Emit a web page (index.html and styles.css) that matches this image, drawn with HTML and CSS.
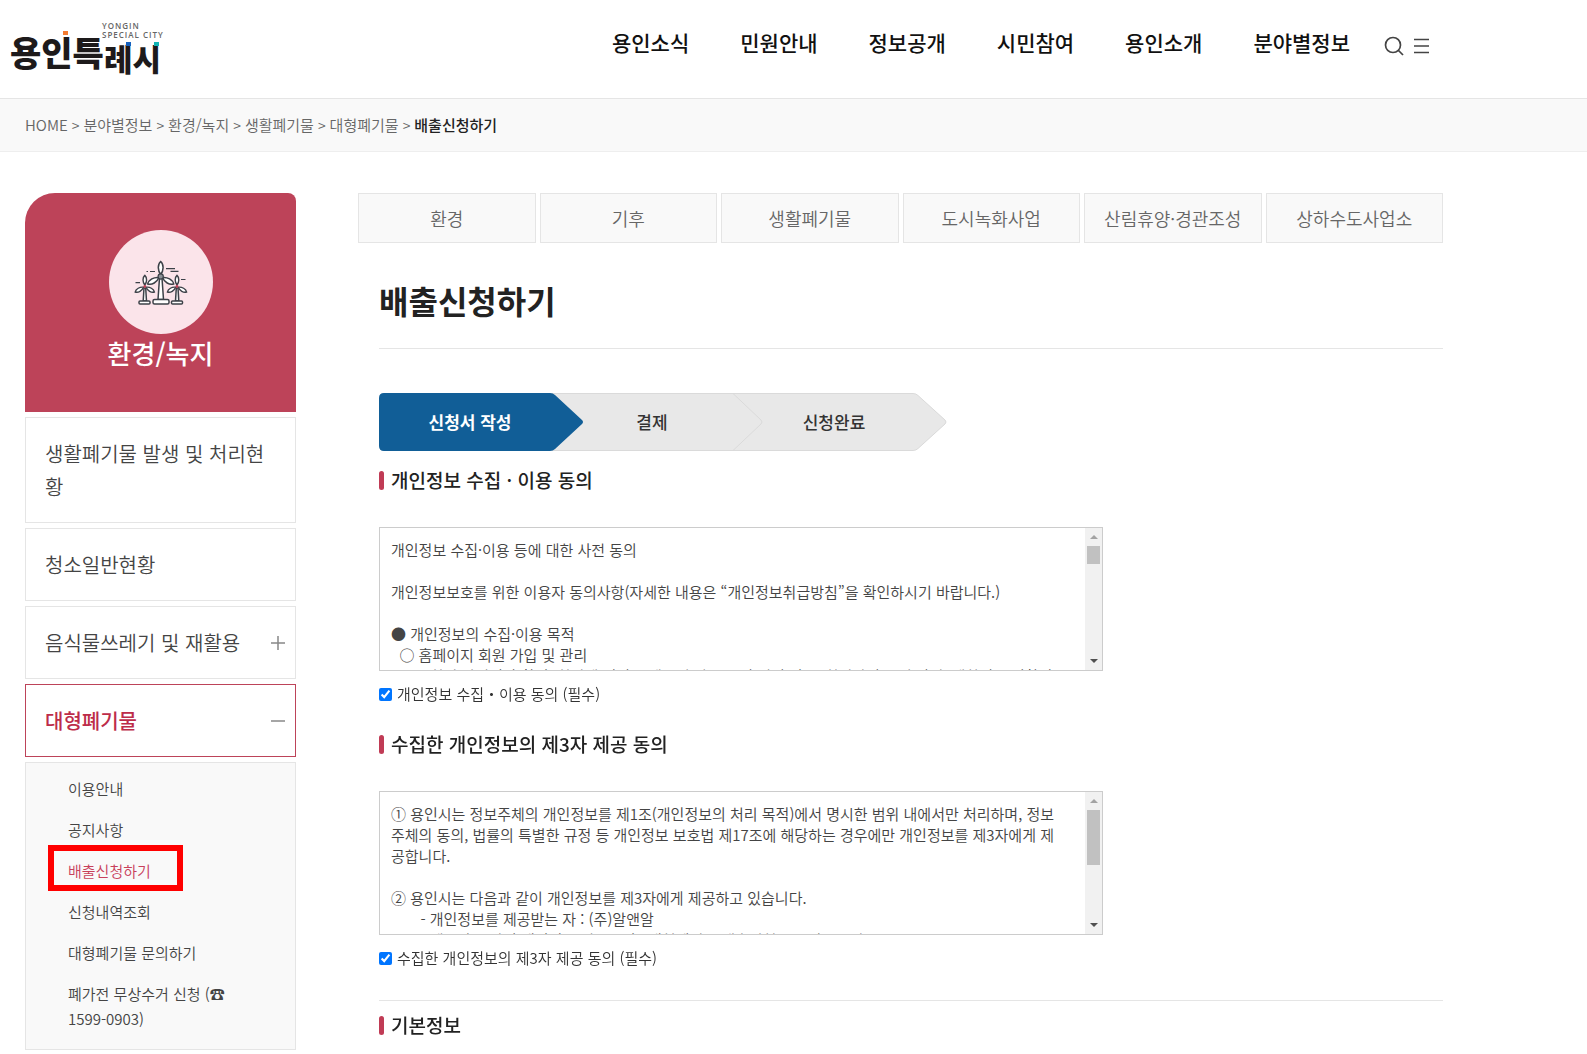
FILE: index.html
```html
<!DOCTYPE html>
<html lang="ko">
<head>
    <meta charset="UTF-8">
    <meta name="viewport" content="width=device-width, initial-scale=1.0">
    <title>배출신청하기 - 용인특례시</title>
    <link rel="stylesheet" href="styles.css">
</head>
<body>
    <header class="header">
        <div class="header-inner">
            <a class="logo" href="#" aria-label="용인특례시">
                <svg width="156" height="70" viewBox="0 0 156 70">
                    <g class="logo-name">
                        <text x="0" y="52" font-size="34">용인특</text>
                        <text x="94" y="57" font-size="31">례시</text>
                    </g>
                    <g class="logo-sub">
                        <text x="92" y="15" font-size="8">YONGIN</text>
                        <text x="92" y="24" font-size="8">SPECIAL CITY</text>
                    </g>
                    <rect x="53" y="17" width="5" height="4" fill="#f47b30"/>
                    <rect x="116" y="28" width="5" height="4" fill="#1560bd"/>
                    <rect x="144" y="28" width="5" height="4" fill="#12b5b5"/>
                </svg>
            </a>
            <nav class="gnb">
                <a href="#">용인소식</a>
                <a href="#">민원안내</a>
                <a href="#">정보공개</a>
                <a href="#">시민참여</a>
                <a href="#">용인소개</a>
                <a href="#">분야별정보</a>
            </nav>
            <div class="util">
                <button type="button" aria-label="검색">
                    <svg width="20" height="20" viewBox="0 0 20 20" fill="none" stroke="#444" stroke-width="1.7">
                        <circle cx="9" cy="9" r="7.5"/>
                        <path d="M14.5 14.5L19 19"/>
                    </svg>
                </button>
                <button type="button" aria-label="전체메뉴">
                    <svg width="15" height="16" viewBox="0 0 15 16" stroke="#444" stroke-width="1.6">
                        <path d="M0 1.5H15M0 8H15M0 14.5H15"/>
                    </svg>
                </button>
            </div>
        </div>
    </header>

    <div class="location">
        <ol class="breadcrumb">
            <li><a href="#">HOME</a></li>
            <li><a href="#">분야별정보</a></li>
            <li><a href="#">환경/녹지</a></li>
            <li><a href="#">생활폐기물</a></li>
            <li><a href="#">대형폐기물</a></li>
            <li class="current">배출신청하기</li>
        </ol>
    </div>

    <div class="container">
        <!-- Left menu -->
        <aside class="sidebar">
            <div class="side-title">
                <svg class="side-icon" width="104" height="104" viewBox="0 0 104 104">
                    <defs>
                        <g id="blades" fill="#fff" stroke="#3c4148">
                            <path d="M0 -2C-3 -6 -3.4 -12 0 -15C3.4 -12 3 -6 0 -2Z"/>
                            <path d="M0 -2C-3 -6 -3.4 -12 0 -15C3.4 -12 3 -6 0 -2Z" transform="rotate(120)"/>
                            <path d="M0 -2C-3 -6 -3.4 -12 0 -15C3.4 -12 3 -6 0 -2Z" transform="rotate(240)"/>
                        </g>
                    </defs>
                    <circle cx="52" cy="52" r="52" fill="#fbe4ea"/>
                    <g fill="#fff" stroke="#3c4148" stroke-width="1.5" stroke-linejoin="round">
                        <path d="M50.5 48L49 69.5H54.5L53 48Z"/>
                        <rect x="44" y="69.5" width="16" height="4.5" rx="1.5"/>
                        <path d="M35 58L34.2 71H37.5L36.7 58Z"/>
                        <rect x="30" y="71" width="11" height="3" rx="1"/>
                        <path d="M67.3 58L66.5 71H69.8L69 58Z"/>
                        <rect x="62.5" y="71" width="11" height="3" rx="1"/>
                    </g>
                    <use href="#blades" transform="translate(51.7 46.5)" stroke-width="1.5"/>
                    <use href="#blades" transform="translate(35.8 56.5) scale(.74)" stroke-width="1.9"/>
                    <use href="#blades" transform="translate(68 56.5) scale(.74)" stroke-width="1.9"/>
                    <circle cx="51.7" cy="46.5" r="2.6" fill="#8b9096" stroke="#3c4148" stroke-width="1.2"/>
                    <circle cx="35.8" cy="56.5" r="1.4" fill="#bd4359"/>
                    <circle cx="68" cy="56.5" r="1.4" fill="#bd4359"/>
                    <path d="M37.5 41.5H39M41 41.5H46M57 38.7H66M61.5 41.3H69.5M26.5 52.7H31M72 49.5H76.5" stroke="#3c4148" stroke-width="1.2"/>
                </svg>
                <h2>환경/녹지</h2>
            </div>
            <ul class="side-menu">
                <li><a class="side-link" href="#">생활폐기물 발생 및 처리현황</a></li>
                <li><a class="side-link" href="#">청소일반현황</a></li>
                <li>
                    <a class="side-link" href="#">음식물쓰레기 및 재활용
                        <svg width="14" height="14" viewBox="0 0 14 14" stroke="#888" stroke-width="1.5"><path d="M0 7H14M7 0V14"/></svg>
                    </a>
                </li>
                <li>
                    <a class="side-link active" href="#">대형폐기물
                        <svg width="14" height="14" viewBox="0 0 14 14" stroke="#888" stroke-width="1.5"><path d="M0 7H14"/></svg>
                    </a>
                    <ul class="sub-menu">
                        <li><a href="#">이용안내</a></li>
                        <li><a href="#">공지사항</a></li>
                        <li class="selected"><a href="#">배출신청하기</a></li>
                        <li><a href="#">신청내역조회</a></li>
                        <li><a href="#">대형폐기물 문의하기</a></li>
                        <li><a href="#">폐가전 무상수거 신청 (☎ 1599-0903)</a></li>
                    </ul>
                </li>
            </ul>
        </aside>

        <main class="content">
            <nav class="tabs">
                <a href="#">환경</a>
                <a href="#">기후</a>
                <a href="#">생활폐기물</a>
                <a href="#">도시녹화사업</a>
                <a href="#">산림휴양·경관조성</a>
                <a href="#">상하수도사업소</a>
            </nav>

            <form class="apply">
                <h1>배출신청하기</h1>

                <div class="steps">
                    <svg width="568" height="58" viewBox="0 0 568 58">
                        <path d="M4 .5H534Q537 .5 539 2.5L566 27Q568 29 566 31L539 55.5Q537 57.5 534 57.5H4Z" fill="#e8e8e8" stroke="#dadada"/>
                        <path d="M354 .5L382 27Q384 29 382 31L354 57.5" fill="none" stroke="#dadada"/>
                        <path d="M5 0H171Q174 0 176 2L203 27Q205 29 203 31L176 56Q174 58 171 58H5Q0 58 0 53V5Q0 0 5 0Z" fill="#115e97"/>
                    </svg>
                    <ol>
                        <li class="on">신청서 작성</li>
                        <li>결제</li>
                        <li>신청완료</li>
                    </ol>
                </div>

                <section class="agree">
                    <h3>개인정보 수집 · 이용 동의</h3>
                    <div class="terms">
                        <textarea aria-label="개인정보 수집 이용 동의" readonly>개인정보 수집·이용 등에 대한 사전 동의

개인정보보호를 위한 이용자 동의사항(자세한 내용은 “개인정보취급방침”을 확인하시기 바랍니다.)

● 개인정보의 수집·이용 목적
  ○ 홈페이지 회원 가입 및 관리
       - 회원 가입의사 확인, 회원제 서비스 제공에 따른 본인 식별·인증, 회원자격 유지·관리, 제한적 본인확인제
         시행에 따른 본인확인, 서비스 부정이용 방지, 각종 고지·통지
  ○ 민원사무 처리
       - 민원인의 신원 확인, 민원사항 확인, 사실조사를 위한 연락·통지, 처리결과 통보</textarea>
                        <div class="scrollbar">
                            <i class="up"></i>
                            <i class="thumb"></i>
                            <i class="down"></i>
                        </div>
                    </div>
                    <label><input type="checkbox" checked>개인정보 수집・이용 동의 (필수)</label>
                </section>

                <section class="agree">
                    <h3>수집한 개인정보의 제3자 제공 동의</h3>
                    <div class="terms">
                        <textarea aria-label="개인정보의 제3자 제공 동의" readonly>① 용인시는 정보주체의 개인정보를 제1조(개인정보의 처리 목적)에서 명시한 범위 내에서만 처리하며, 정보주체의 동의, 법률의 특별한 규정 등 개인정보 보호법 제17조에 해당하는 경우에만 개인정보를 제3자에게 제공합니다.

② 용인시는 다음과 같이 개인정보를 제3자에게 제공하고 있습니다.
       - 개인정보를 제공받는 자 : (주)알앤알
       - 제공받는 자의 개인정보 이용목적 : 대형폐기물 배출신청물품 바로수거
       - 제공하는 개인정보 항목 : 성명, 주소, 연락처
       - 보유 및 이용기간 : 수거 완료 시까지</textarea>
                        <div class="scrollbar">
                            <i class="up"></i>
                            <i class="thumb long"></i>
                            <i class="down"></i>
                        </div>
                    </div>
                    <label><input type="checkbox" checked>수집한 개인정보의 제3자 제공 동의 (필수)</label>
                </section>

                <section class="basic">
                    <h3>기본정보</h3>
                </section>
            </form>
        </main>
    </div>
</body>
</html>
```
FILE: styles.css
```css
*,
*::before,
*::after {
    box-sizing: border-box;
}

body {
    margin: 0;
    font-family: "Noto Sans CJK KR", "DejaVu Sans", sans-serif;
    font-size: 15px;
    font-weight: 350;
    color: #333;
    background-color: #fff;
}

h1, h2, h3, ul, ol {
    margin: 0;
    padding: 0;
}

ul, ol {
    list-style: none;
}

a {
    color: inherit;
    text-decoration: none;
}

/* Header */
.header {
    border-bottom: 1px solid #e5e5e5;
}

.header-inner {
    display: flex;
    align-items: center;
    max-width: 1468px;
    height: 98px;
    padding: 0 39px 0 10px;
}

.logo svg {
    display: block;
}

.logo-name {
    font-weight: 900;
    fill: #1d1a1b;
}

.logo-sub {
    font-family: "Open Sans", sans-serif;
    font-weight: 600;
    letter-spacing: 1px;
    fill: #666;
}

.gnb {
    display: flex;
    gap: 51px;
    margin-left: auto;
    padding-bottom: 14px;
    font-size: 21px;
    font-weight: 500;
    line-height: 30px;
    color: #111;
}

.util {
    display: flex;
    align-items: center;
    gap: 10px;
    margin-left: 34px;
    padding-bottom: 6px;
}

.util button {
    display: flex;
    padding: 0;
    border: none;
    background: none;
    cursor: pointer;
}

/* Breadcrumb */
.location {
    background-color: #f9f9f9;
    border-bottom: 1px solid #eee;
}

.breadcrumb {
    display: flex;
    max-width: 1468px;
    padding: 0 25px;
    line-height: 52px;
    color: #666;
}

.breadcrumb li {
    display: flex;
}

.breadcrumb li + li::before {
    content: ">";
    margin: 0 4px;
    font-size: 14px;
    font-weight: 350;
    color: #666;
}

.breadcrumb .current {
    font-weight: 500;
    color: #222;
}

.container {
    display: flex;
    gap: 62px;
    max-width: 1468px;
    padding: 41px 25px 0;
}

/* Sidebar */
.sidebar {
    flex: 0 0 271px;
}

.side-title {
    padding: 37px 0 40px;
    background-color: #bd4359;
    border-radius: 30px 8px 0 0;
    text-align: center;
    color: #fff;
}

.side-icon {
    display: block;
    margin: 0 auto;
}

.side-title h2 {
    font-size: 26px;
    font-weight: 500;
    line-height: 38px;
}

.side-link {
    display: flex;
    justify-content: space-between;
    align-items: center;
    margin-top: 5px;
    padding: 19px 25px 19px 19px;
    border: 1px solid #e5e5e5;
    font-size: 20px;
    line-height: 33px;
    color: #444;
}

.side-link svg {
    margin-right: -15px;
}

.side-link.active {
    border-color: #bd4359;
    font-weight: 500;
    color: #bd2c49;
}

.sub-menu {
    margin-top: 5px;
    padding: 5px 42px 10px;
    border: 1px solid #e5e5e5;
    background-color: #f9f9f9;
    line-height: 25px;
    color: #444;
}

.sub-menu li {
    position: relative;
    padding: 8px 0;
}

.sub-menu .selected {
    color: #c8405b;
}

/* red marker over the current page */
.sub-menu .selected::after {
    content: "";
    position: absolute;
    top: -5px;
    left: -20px;
    width: 135px;
    height: 46px;
    border: 6px solid #f00;
}

/* Content */
.content {
    flex: 1;
    min-width: 0;
}

.tabs {
    display: grid;
    grid-template-columns: repeat(6, 1fr);
    gap: 4px;
}

.tabs a {
    border: 1px solid #e5e5e5;
    background-color: #f9f9f9;
    font-size: 18px;
    line-height: 48px;
    text-align: center;
    color: #666;
}

.apply {
    padding-left: 21px;
}

h1 {
    padding: 33px 0 24px;
    border-bottom: 1px solid #e5e5e5;
    font-size: 32px;
    line-height: 48px;
    color: #222;
}

.steps {
    display: grid;
    margin: 44px 0 14px;
}

.steps svg,
.steps ol {
    grid-area: 1 / 1;
}

.steps ol {
    display: flex;
    font-size: 17px;
    font-weight: 500;
    line-height: 58px;
    text-align: center;
}

.steps li {
    width: 182px;
}

.steps .on {
    font-weight: 700;
    color: #fff;
}

h3 {
    display: flex;
    align-items: center;
    gap: 7px;
    font-size: 19px;
    font-weight: 500;
    line-height: 30px;
    color: #222;
}

h3::before {
    content: "";
    width: 5px;
    height: 19px;
    border-radius: 3px;
    background-color: #c03b55;
}

.agree {
    margin-bottom: 23px;
}

.terms {
    display: flex;
    max-width: 724px;
    height: 144px;
    margin: 32px 0 11px;
    border: 1px solid #ccc;
}

.terms textarea {
    flex: 1;
    padding: 11px 23px 0 11px;
    border: none;
    font: inherit;
    line-height: 21px;
    color: #444;
    resize: none;
    outline: none;
}

.scrollbar {
    display: flex;
    flex-direction: column;
    align-items: center;
    width: 17px;
    padding: 7px 0;
    background-color: #f1f1f1;
}

.scrollbar .up {
    border: 4px solid transparent;
    border-top: none;
    border-bottom-color: #a3a3a3;
}

.scrollbar .down {
    margin-top: auto;
    border: 4px solid transparent;
    border-bottom: none;
    border-top-color: #505050;
}

.scrollbar .thumb {
    width: 13px;
    height: 18px;
    margin-top: 7px;
    background-color: #c1c1c1;
}

.scrollbar .thumb.long {
    height: 55px;
}

.agree label {
    display: flex;
    align-items: center;
    gap: 5px;
    line-height: 24px;
}

.agree input {
    width: 13px;
    height: 13px;
    margin: 0;
    accent-color: #0075ff;
}

.basic {
    margin-top: 30px;
    padding-top: 9px;
    border-top: 1px solid #e5e5e5;
}
```
